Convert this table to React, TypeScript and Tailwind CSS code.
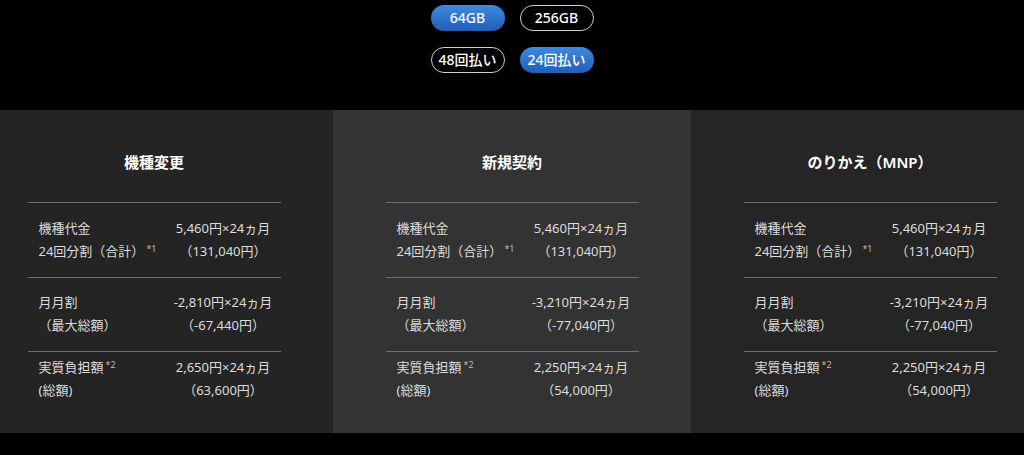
import React from "react";

type Row = { label: React.ReactNode[]; value: string[]; pt: string };

const plans = [
  {
    title: "機種変更",
    bg: "bg-[#242424]",
    monthly: ["-2,810円×24ヵ月", "（-67,440円）"],
    real: ["2,650円×24ヵ月", "（63,600円）"],
  },
  {
    title: "新規契約",
    bg: "bg-[#333333]",
    monthly: ["-3,210円×24ヵ月", "（-77,040円）"],
    real: ["2,250円×24ヵ月", "（54,000円）"],
  },
  {
    title: "のりかえ（MNP）",
    bg: "bg-[#252525]",
    monthly: ["-3,210円×24ヵ月", "（-77,040円）"],
    real: ["2,250円×24ヵ月", "（54,000円）"],
  },
];

function Pill({ label, active }: { label: string; active?: boolean }) {
  return (
    <button
      className={
        active
          ? "w-[74px] h-[26px] rounded-full bg-gradient-to-b from-[#3f89de] to-[#1f5fb8] text-white text-[14px] font-medium leading-none"
          : "w-[74px] h-[26px] rounded-full border-[1.5px] border-[#cfcfcf] text-white text-[14px] font-medium leading-none"
      }
    >
      {label}
    </button>
  );
}

function Sup({ n }: { n: string }) {
  return <sup className="text-[9px] text-[#bbbbbb] ml-[2px] -top-[4px]">*{n}</sup>;
}

function PlanRow({ label, value, pt }: Row) {
  return (
    <div className={`flex border-t border-[#6e6e6e] pl-[11px] ${pt} pb-[14px]`}>
      <div className="w-[127px] whitespace-nowrap">
        {label.map((l, i) => (
          <div key={i} className="h-[23px] leading-[23px]">{l}</div>
        ))}
      </div>
      <div className="flex-1 text-center whitespace-nowrap">
        {value.map((v, i) => (
          <div key={i} className="h-[23px] leading-[23px]">{v}</div>
        ))}
      </div>
    </div>
  );
}

export default function App() {
  return (
    <div className="bg-black h-[455px] overflow-hidden font-['Noto_Sans','Noto_Sans_CJK_JP',sans-serif]">
      {/* selectors */}
      <div className="flex flex-col items-center gap-4 pt-[5px]">
        <div className="flex gap-[15px]">
          <Pill label="64GB" active />
          <Pill label="256GB" />
        </div>
        <div className="flex gap-[15px]">
          <Pill label="48回払い" />
          <Pill label="24回払い" active />
        </div>
      </div>

      {/* plans */}
      <div className="mt-[37px] flex justify-center overflow-hidden">
        {plans.map((p) => (
          <div key={p.title} className={`w-[358px] h-[323px] shrink-0 ${p.bg}`}>
            <h3 className="pt-[41px] text-center text-white text-[15px] font-semibold leading-[22px]">
              {p.title}
            </h3>
            <div className="w-[253px] mx-auto mt-[29px] text-[13px] text-[#dcdcdc]">
              <PlanRow
                pt="pt-[14px]"
                label={["機種代金", <>24回分割（合計）<Sup n="1" /></>]}
                value={["5,460円×24ヵ月", "（131,040円）"]}
              />
              <PlanRow pt="pt-[13px]" label={["月月割", "（最大総額）"]} value={p.monthly} />
              <PlanRow pt="pt-[4px]" label={[<>実質負担額<Sup n="2" /></>, "(総額)"]} value={p.real} />
            </div>
          </div>
        ))}
      </div>
    </div>
  );
}
